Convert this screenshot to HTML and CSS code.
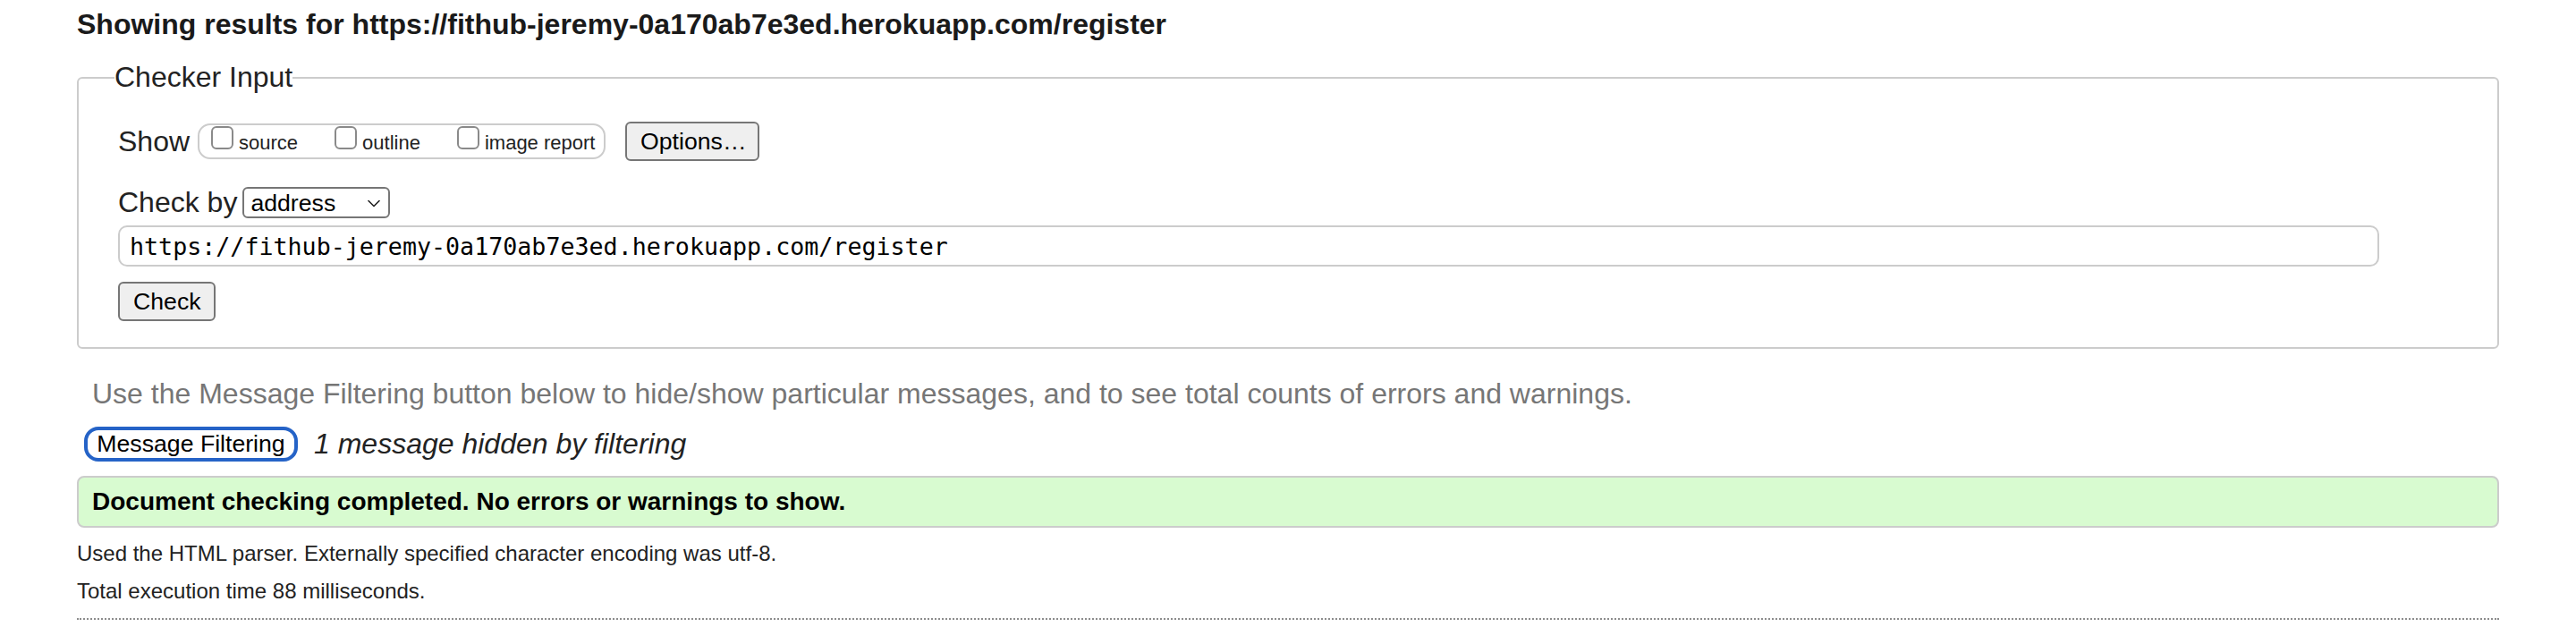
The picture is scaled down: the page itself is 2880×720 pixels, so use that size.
FILE: index.html
```html
<!DOCTYPE html>
<html lang="en">
<head>
<meta charset="utf-8">
<title>Nu Html Checker</title>
<link rel="stylesheet" href="styles.css">
</head>
<body>
<h2 class="title">Showing results for https://fithub-jeremy-0a170ab7e3ed.herokuapp.com/register</h2>
<fieldset class="checker">
  <legend class="checker-legend">Checker Input</legend>
  <div class="row row-show">
    <span class="row-label">Show</span>
    <span class="show-group">
      <label class="opt"><input type="checkbox" class="cb"><span>source</span></label>
      <label class="opt"><input type="checkbox" class="cb"><span>outline</span></label>
      <label class="opt"><input type="checkbox" class="cb"><span>image report</span></label>
    </span>
    <button class="btn btn-options" type="button">Options…</button>
  </div>
  <div class="row row-checkby">
    <span class="row-label">Check by</span>
    <span class="select-wrap">
      <select class="method"><option>address</option></select>
      <svg class="chev" width="14" height="9" viewBox="0 0 14 9"><path d="M1 1.5 L7 7.5 L13 1.5" fill="none" stroke="#222" stroke-width="1.6" stroke-linecap="round" stroke-linejoin="round"/></svg>
    </span>
  </div>
  <input class="url" type="text" value="https://fithub-jeremy-0a170ab7e3ed.herokuapp.com/register">
  <div class="row-submit">
    <button class="btn btn-check" type="button">Check</button>
  </div>
</fieldset>
<p class="hint">Use the Message Filtering button below to hide/show particular messages, and to see total counts of errors and warnings.</p>
<div class="filter-row">
  <button class="btn-filter" type="button">Message Filtering</button>
  <span class="hidden-note">1 message hidden by filtering</span>
</div>
<p class="result success">Document checking completed. No errors or warnings to show.</p>
<p class="info">Used the HTML parser. Externally specified character encoding was utf-8.</p>
<p class="info info-second">Total execution time 88 milliseconds.</p>
<hr class="end">
</body>
</html>
```
FILE: styles.css
```css
html, body {
  background: #ffffff;
}
body {
  margin: 0;
  padding: 0 86px;
  font-family: "Liberation Sans", Arial, Helvetica, sans-serif;
  color: #222222;
}
.title {
  margin: 9px 0 0;
  font-size: 32px;
  line-height: 37px;
  font-weight: 700;
  color: #1a1a1a;
}
.checker {
  margin: 22px 0 0;
  padding: 31px 44px 29px;
  border: 2px solid #cccccc;
  border-radius: 6px;
  min-width: 0;
}
.checker-legend {
  padding: 0;
  margin-left: -4px;
  font-size: 32px;
  line-height: 37px;
}
.row {
  display: flex;
  align-items: center;
}
.row-label {
  font-size: 32px;
  line-height: 37px;
}
.row-show {
  height: 44px;
}
.show-group {
  display: flex;
  align-items: flex-end;
  box-sizing: border-box;
  height: 40px;
  width: 456px;
  margin-left: 9px;
  padding: 0 0 9px 13px;
  border: 2px solid #cccccc;
  border-radius: 14px;
  gap: 14px;
}
.opt {
  display: flex;
  align-items: flex-end;
  gap: 6px;
  font-size: 22px;
  line-height: 22px;
  margin-right: 27px;
}
.opt:last-child {
  margin-right: 0;
}
.opt span {
  position: relative;
  top: 4px;
}
.cb {
  -webkit-appearance: none;
  appearance: none;
  box-sizing: border-box;
  width: 25px;
  height: 26px;
  margin: 0;
  border: 2px solid #8a8a8a;
  border-radius: 6px;
  background: #ffffff;
}
.btn {
  box-sizing: border-box;
  height: 44px;
  padding: 0 15px;
  border: 2px solid #767676;
  border-radius: 6px;
  background: #efefef;
  color: #000000;
  font-family: "Liberation Sans", Arial, Helvetica, sans-serif;
  font-size: 26.67px;
}
.btn-options {
  margin-left: 22px;
  width: 150px;
}
.row-checkby {
  margin-top: 29px;
  height: 35px;
}
.select-wrap {
  position: relative;
  display: inline-block;
  margin-left: 6px;
}
.method {
  -webkit-appearance: none;
  appearance: none;
  box-sizing: border-box;
  width: 165px;
  height: 35px;
  padding: 0 0 0 7px;
  border: 2px solid #767676;
  border-radius: 6px;
  background: #ffffff;
  color: #000000;
  font-family: "Liberation Sans", Arial, Helvetica, sans-serif;
  font-size: 26.67px;
  display: block;
}
.chev {
  position: absolute;
  right: 11px;
  top: 14px;
  pointer-events: none;
}
.url {
  display: block;
  box-sizing: border-box;
  width: calc(100% - 88px);
  height: 46px;
  margin: 8px 0 0;
  padding: 0 11px;
  border: 2px solid #cccccc;
  border-radius: 10px;
  background: #ffffff;
  color: #000000;
  font-family: "DejaVu Sans Mono", Menlo, monospace;
  font-size: 26.67px;
}
.row-submit {
  margin-top: 17px;
}
.btn-check {
  width: 109px;
  height: 44px;
}
.hint {
  margin: 32px 0 0;
  padding-left: 17px;
  font-size: 32px;
  line-height: 37px;
  color: #767676;
}
.filter-row {
  display: flex;
  align-items: center;
  margin-top: 18px;
  padding-left: 8px;
  height: 39px;
}
.btn-filter {
  box-sizing: border-box;
  height: 39px;
  width: 239px;
  padding: 0 9px;
  border: 4px solid #2563c7;
  border-radius: 16px;
  background: #ffffff;
  color: #000000;
  font-family: "Liberation Sans", Arial, Helvetica, sans-serif;
  font-size: 26.67px;
}
.hidden-note {
  margin-left: 18px;
  font-size: 32px;
  font-style: italic;
  color: #222222;
}
.result {
  display: flex;
  align-items: center;
  box-sizing: border-box;
  height: 58px;
  margin: 16px 0 0;
  padding: 0 15px;
  border: 2px solid #cccccc;
  border-radius: 8px;
  font-size: 28px;
  font-weight: 700;
  color: #000000;
}
.success {
  background: #d8fbd0;
}
.info {
  margin: 15px 0 0;
  font-size: 24px;
  line-height: 28px;
  color: #222222;
}
.info-second {
  margin-top: 14px;
}
.end {
  margin: 16px 0 0;
  border: 0;
  border-top: 2px dotted #8c8c8c;
  height: 0;
}
```
